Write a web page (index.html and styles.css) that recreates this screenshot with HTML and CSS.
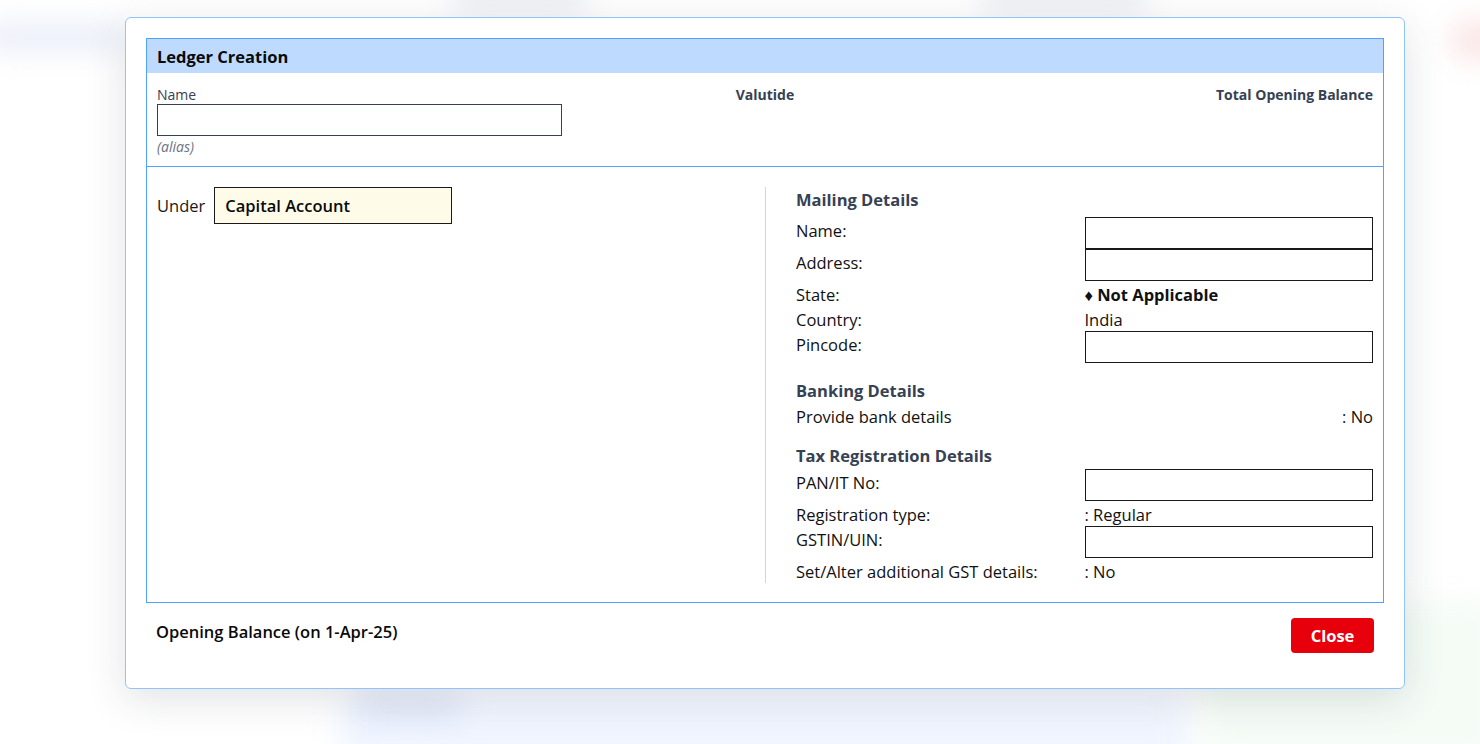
FILE: index.html
```html
<!DOCTYPE html>
<html lang="en">
<head>
<meta charset="utf-8">
<title>Ledger Creation</title>
<link rel="stylesheet" href="styles.css">
</head>
<body>
<div class="backdrop">
  <div class="blob blob-tl"></div>
  <div class="blob blob-tc1"></div>
  <div class="blob blob-tc2"></div>
  <div class="blob blob-tr"></div>
  <div class="blob blob-bottom"></div>
  <div class="blob blob-bottom-dark"></div>
  <div class="blob blob-br"></div>
</div>
<div class="overlay">
  <div class="modal">
    <div class="ledger">
      <div class="ledger-head">Ledger Creation</div>
      <div class="ledger-top">
        <div class="name-block">
          <div class="small-label">Name</div>
          <div class="input name-input"></div>
          <div class="alias">(alias)</div>
        </div>
        <div class="top-title">Valutide</div>
        <div class="top-title top-right">Total Opening Balance</div>
      </div>
      <div class="ledger-body">
        <div class="left-col">
          <div class="under-row">
            <span class="under-label">Under</span>
            <div class="under-box">Capital Account</div>
          </div>
        </div>
        <div class="right-col">
          <div class="section-title mailing">Mailing Details</div>
          <div class="row"><div class="lbl">Name:</div><div class="input field"></div></div>
          <div class="row"><div class="lbl">Address:</div><div class="input field"></div></div>
          <div class="row"><div class="lbl">State:</div><div class="val strong">♦ Not Applicable</div></div>
          <div class="row"><div class="lbl">Country:</div><div class="val">India</div></div>
          <div class="row"><div class="lbl">Pincode:</div><div class="input field"></div></div>

          <div class="section-title banking">Banking Details</div>
          <div class="row row-split"><div class="lbl">Provide bank details</div><div class="val">: No</div></div>

          <div class="section-title tax">Tax Registration Details</div>
          <div class="row"><div class="lbl">PAN/IT No:</div><div class="input field"></div></div>
          <div class="row"><div class="lbl">Registration type:</div><div class="val">: Regular</div></div>
          <div class="row"><div class="lbl">GSTIN/UIN:</div><div class="input field"></div></div>
          <div class="row"><div class="lbl">Set/Alter additional GST details:</div><div class="val">: No</div></div>
        </div>
      </div>
    </div>
    <div class="footer">
      <div class="opening">Opening Balance (on 1-Apr-25)</div>
      <button class="close-btn" type="button">Close</button>
    </div>
  </div>
</div>
</body>
</html>
```

FILE: styles.css
```css
html, body {
  margin: 0;
  padding: 0;
}
body {
  width: 1480px;
  height: 744px;
  overflow: hidden;
  position: relative;
  background: #ffffff;
  font-family: "Open Sans", "Noto Sans", sans-serif;
  font-size: 16.5px;
  color: #111111;
}

/* blurred page behind the dialog */
.backdrop {
  position: absolute;
  inset: 0;
  z-index: 0;
  overflow: hidden;
}
.blob {
  position: absolute;
  filter: blur(14px);
  border-radius: 20px;
}
.blob-tl { left: -20px; top: 22px; width: 150px; height: 30px; background: rgba(222, 228, 245, 0.6); }
.blob-tc1 { left: 450px; top: -14px; width: 140px; height: 26px; background: rgba(224, 226, 232, 0.7); }
.blob-tc2 { left: 980px; top: -14px; width: 170px; height: 26px; background: rgba(224, 226, 232, 0.7); }
.blob-tr { left: 1450px; top: 20px; width: 60px; height: 40px; background: rgba(250, 220, 220, 0.7); }
.blob-bottom { left: 340px; top: 692px; width: 850px; height: 80px; background: rgba(238, 244, 255, 0.9); }
.blob-bottom-dark { left: 360px; top: 695px; width: 100px; height: 22px; background: rgba(212, 222, 244, 0.7); }
.blob-br { left: 1200px; top: 600px; width: 300px; height: 160px; background: rgba(242, 251, 244, 0.8); }

.overlay {
  position: relative;
  z-index: 1;
  padding: 17px 0 0 125px;
}
.modal {
  width: 1280px;
  box-sizing: border-box;
  background: #ffffff;
  border: 1px solid #8ec5ff;
  border-radius: 6px;
  padding: 20px;
  box-shadow: 0 10px 40px rgba(40, 50, 70, 0.14);
}

.ledger {
  border: 1px solid #51a2ff;
}
.ledger-head {
  background: #bedbff;
  padding: 6px 10px 4px;
  line-height: 24px;
  font-size: 16.5px;
  font-weight: 700;
  color: #0a0a0a;
}
.ledger-top {
  display: grid;
  grid-template-columns: 1fr auto 1fr;
  align-items: start;
  padding: 13px 10px 10px;
  border-bottom: 1px solid #51a2ff;
}
.small-label {
  font-size: 14px;
  line-height: 18px;
  color: #364153;
}
.input {
  box-sizing: border-box;
  height: 32px;
  background: #ffffff;
  border: 1px solid #1a1a1a;
}
.name-input {
  width: 405px;
  border-color: #364153;
}
.alias {
  margin-top: 2px;
  font-size: 14px;
  line-height: 18px;
  font-style: italic;
  color: #6a7282;
}
.top-title {
  font-size: 14px;
  font-weight: 700;
  line-height: 18px;
  color: #364153;
}
.top-right {
  justify-self: end;
}

.ledger-body {
  display: grid;
  grid-template-columns: 1fr 1fr;
  padding: 20px 10px 19px;
}
.under-row {
  display: flex;
  align-items: center;
  gap: 9px;
}
.under-label {
  line-height: 24px;
  color: #1a1a1a;
}
.under-box {
  box-sizing: border-box;
  width: 238px;
  height: 37px;
  display: flex;
  align-items: center;
  padding: 0 10px;
  background: #fefce8;
  border: 1px solid #1a1a1a;
  font-weight: 600;
  color: #0a0a0a;
}

.right-col {
  border-left: 1px solid #d1d5dc;
  padding-left: 30px;
}
.section-title {
  font-weight: 700;
  line-height: 24px;
  color: #364153;
}
.section-title.mailing { margin-top: 1px; margin-bottom: 5px; }
.section-title.banking { margin-top: 16px; }
.section-title.tax { margin-top: 16px; margin-bottom: 1px; }

.row {
  display: grid;
  grid-template-columns: 1fr 1fr;
  align-items: start;
}
.lbl, .val {
  padding-top: 2px;
  line-height: 23px;
}
.val.strong {
  font-weight: 700;
}
.row-split .val {
  justify-self: end;
}

.footer {
  display: flex;
  justify-content: space-between;
  align-items: flex-start;
  padding: 15px 10px;
}
.opening {
  padding-top: 2px;
  line-height: 24px;
  font-weight: 600;
  color: #0a0a0a;
}
.close-btn {
  box-sizing: border-box;
  width: 83px;
  height: 35px;
  border: none;
  border-radius: 4px;
  background: #e7000b;
  color: #ffffff;
  font-family: inherit;
  font-size: 16.5px;
  font-weight: 700;
  padding: 0;
}
```
